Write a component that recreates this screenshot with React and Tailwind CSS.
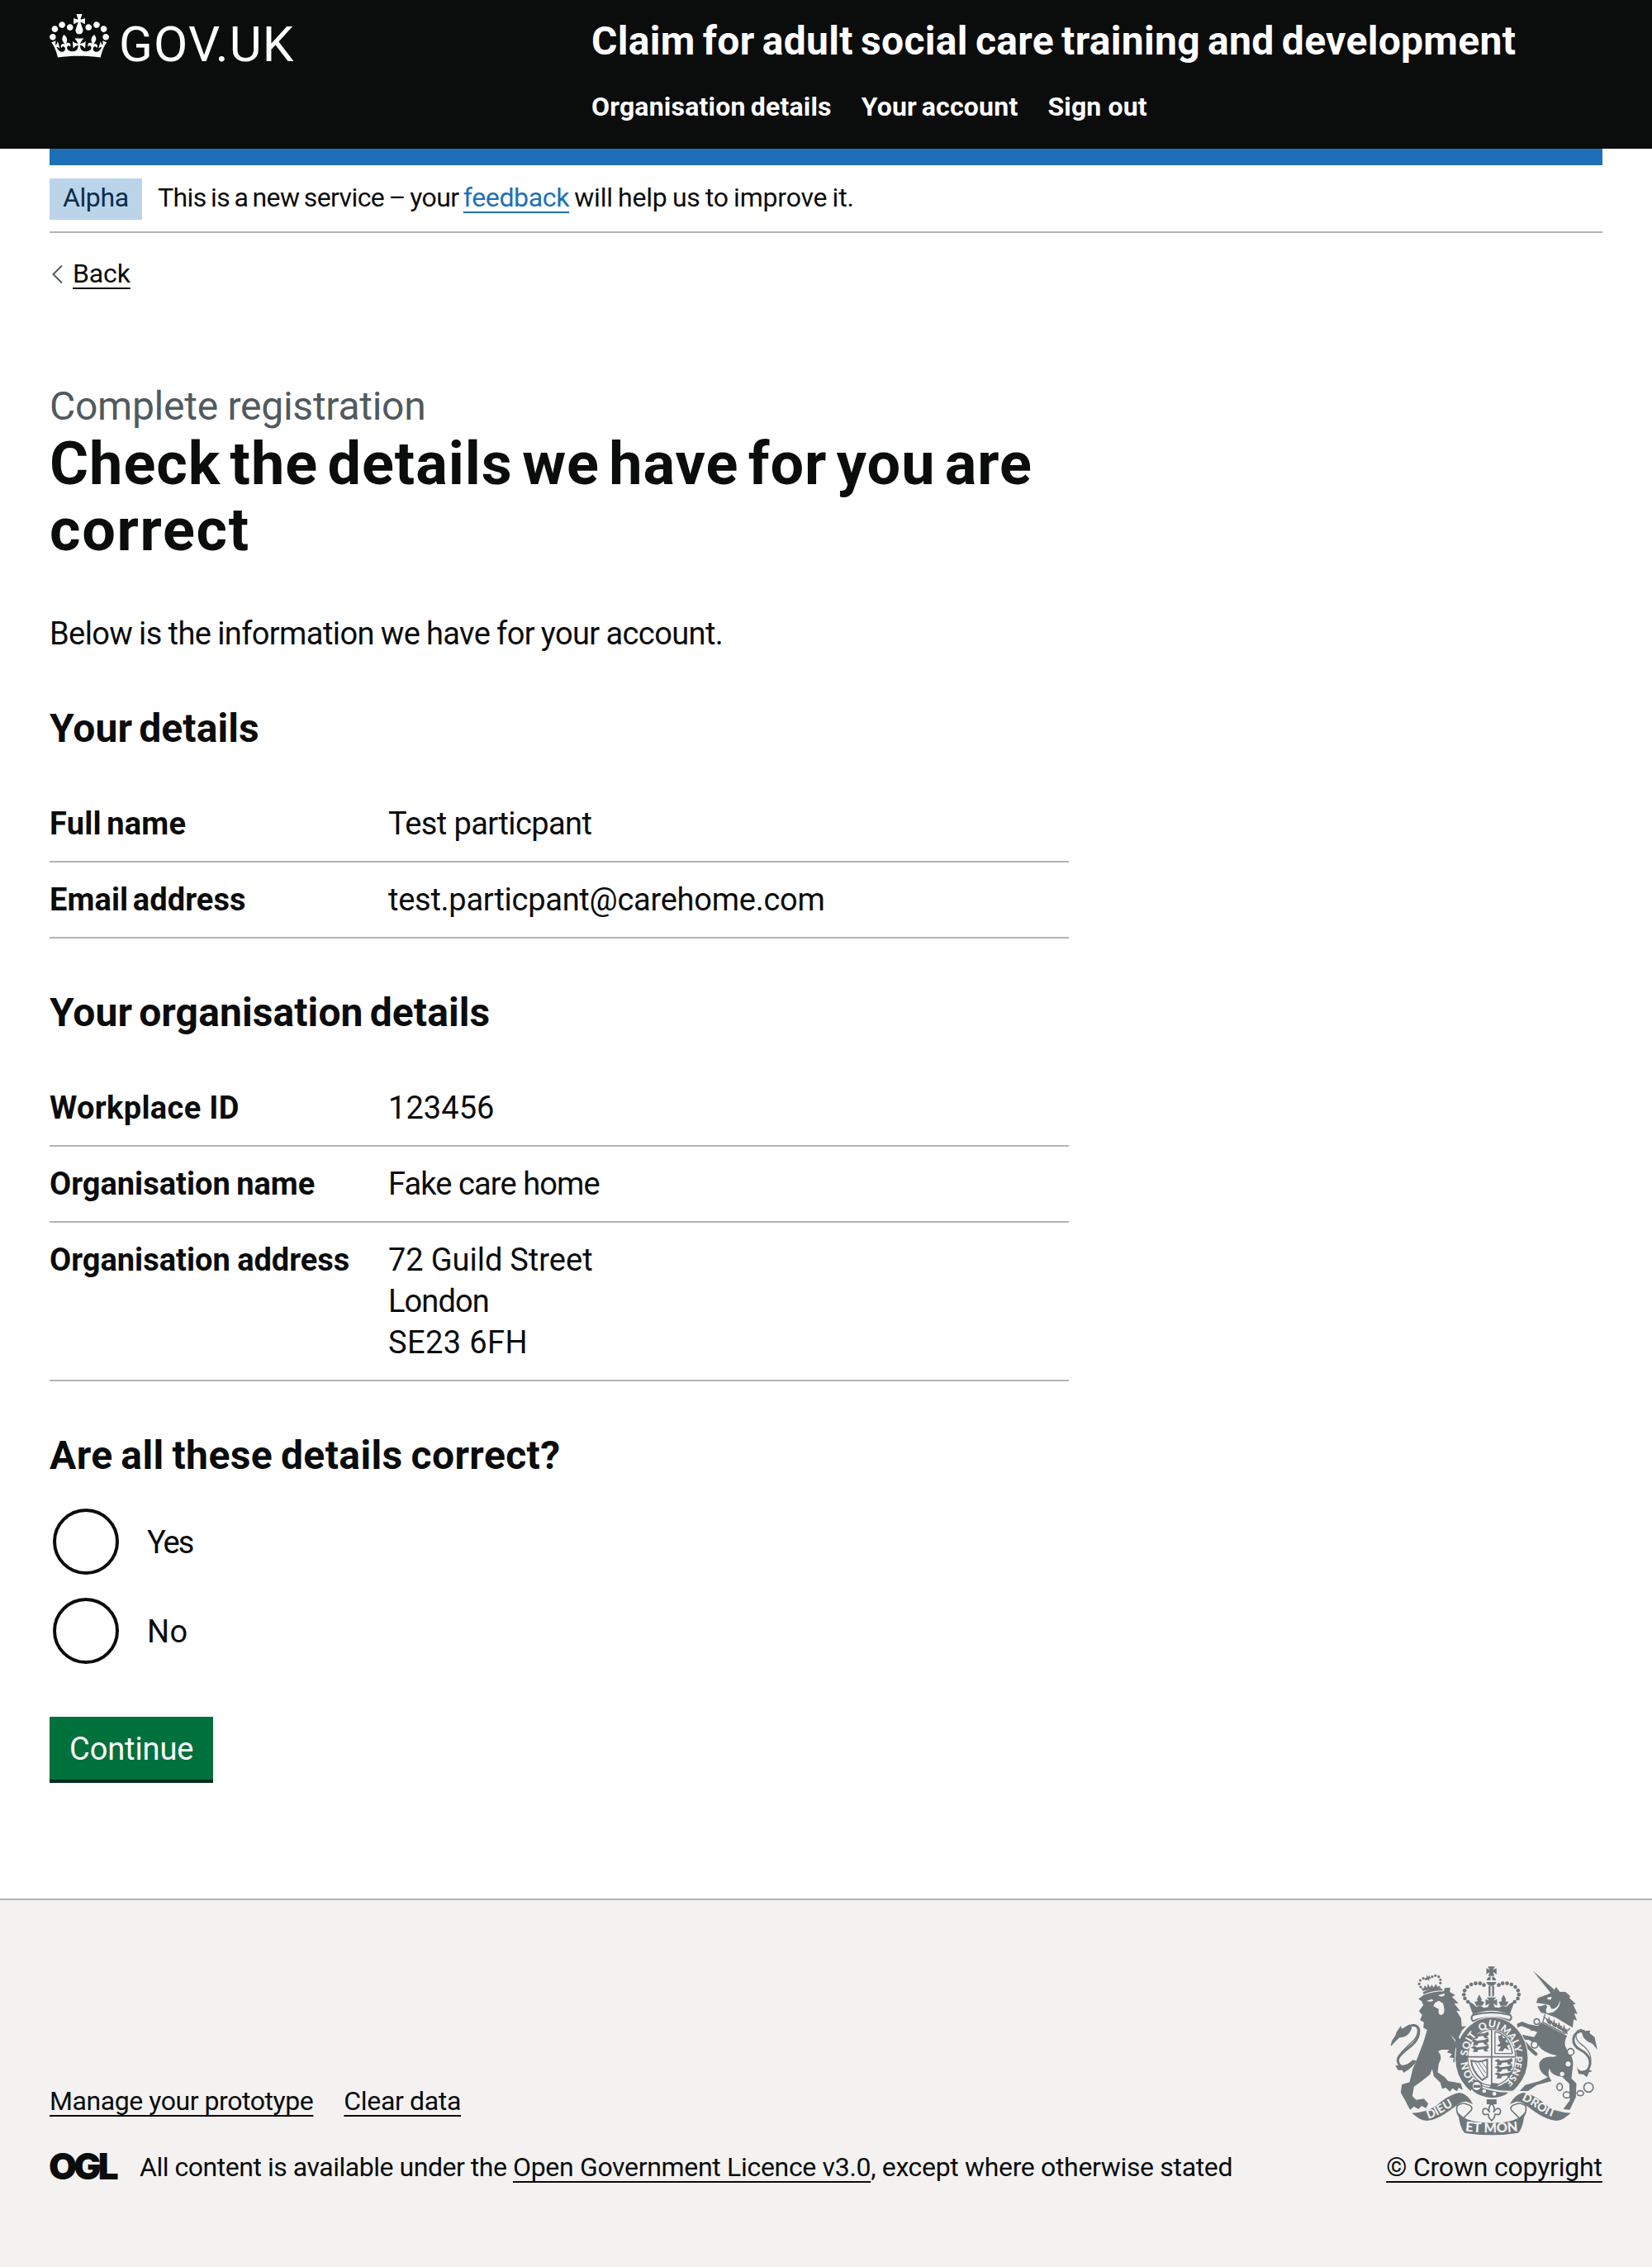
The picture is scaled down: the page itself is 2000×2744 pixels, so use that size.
import React from "react";

const link = "underline decoration-2 underline-offset-[6px] [text-decoration-skip-ink:none]";

function CrownIcon() {
  return (
    <svg viewBox="0 0 132 97" className="h-[53px] w-[72px]" fill="currentColor" aria-hidden="true">
      <path
        fillRule="evenodd"
        d="M25 30.2c3.5 1.5 7.7-.2 9.1-3.7 1.5-3.6-.2-7.8-3.9-9.2-3.6-1.4-7.6.3-9.1 3.9-1.4 3.5.3 7.5 3.9 9zM9 39.5c3.6 1.5 7.8-.2 9.2-3.7 1.5-3.6-.2-7.8-3.9-9.1-3.6-1.5-7.6.2-9.1 3.8-1.4 3.5.3 7.5 3.8 9zM4.4 57.2c3.5 1.5 7.7-.2 9.1-3.8 1.5-3.6-.2-7.7-3.9-9.1-3.5-1.5-7.6.3-9.1 3.8-1.4 3.5.3 7.6 3.9 9.1zm38.3-21.4c3.5 1.5 7.7-.2 9.1-3.8 1.5-3.6-.2-7.7-3.9-9.1-3.6-1.5-7.6.3-9.1 3.8-1.3 3.6.4 7.7 3.9 9.1zm64.4-5.6c-3.6 1.5-7.8-.2-9.1-3.7-1.5-3.6.2-7.8 3.8-9.2 3.6-1.4 7.7.3 9.2 3.9 1.3 3.5-.4 7.5-3.9 9zm15.9 9.3c-3.6 1.5-7.7-.2-9.1-3.7-1.5-3.6.2-7.8 3.7-9.1 3.6-1.5 7.7.2 9.2 3.8 1.5 3.5-.3 7.5-3.8 9zm4.7 17.7c-3.6 1.5-7.8-.2-9.2-3.8-1.5-3.6.2-7.7 3.9-9.1 3.6-1.5 7.7.3 9.2 3.8 1.3 3.5-.4 7.6-3.9 9.1zM89.3 35.8c-3.6 1.5-7.8-.2-9.2-3.8-1.4-3.6.2-7.7 3.9-9.1 3.6-1.5 7.7.3 9.2 3.8 1.4 3.6-.3 7.7-3.9 9.1zM69.7 17.7l8.9 4.7V9.3l-8.9 2.8c-.2-.3-.5-.6-.9-.9L72.4 0H59.6l3.5 11.2c-.3.3-.6.5-.9.9l-8.8-2.8v13.1l8.8-4.7c.3.3.6.7.9.9l-5 15.4v.1c-.2.8-.4 1.6-.4 2.4 0 4.1 3.1 7.5 7 8.1h.2c.3 0 .7.1 1 .1.4 0 .7 0 1-.1h.2c4-.6 7.1-4.1 7.1-8.1 0-.8-.1-1.7-.4-2.4V34l-5.1-15.4c.4-.2.7-.6 1-.9zM66 92.8c16.9 0 32.8 1.1 47.1 3.2 4-16.9 8.9-26.7 14-33.5l-9.6-3.4c1 4.9 1.1 7.2 0 10.2-1.5-1.4-3-4.3-4.2-8.7L108.6 76c2.8-2 5-3.2 7.5-3.3-4.4 9.4-10 11.9-13.6 11.2-4.3-.8-6.3-4.6-5.6-7.9 1-4.7 5.7-5.9 8-.5 4.3-8.7-3-11.4-7.6-8.8 7.1-7.2 7.9-13.5 2.1-21.1-8 6.1-8.1 12.3-4.5 20.8-4.7-5.4-12.1-2.5-9.5 6.2 3.4-5.2 7.9-2 7.2 3.1-.6 4.3-6.4 7.8-13.5 7.2-10.3-.9-10.9-8-11.2-13.8 2.5-.5 7.1 1.8 11 7.3L80.2 60c-4.1 4.4-8 5.3-12.3 5.4 1.4-4.4 8-11.6 8-11.6H55.5s6.4 7.2 7.9 11.6c-4.2-.1-8-1-12.3-5.4l1.4 16.4c3.9-5.5 8.5-7.7 10.9-7.3-.3 5.8-.9 12.8-11.1 13.8-7.2.6-12.9-2.9-13.5-7.2-.7-5 3.8-8.3 7.1-3.1 2.7-8.7-4.6-11.6-9.4-6.2 3.7-8.5 3.6-14.7-4.6-20.8-5.8 7.6-5 13.9 2.2 21.1-4.7-2.6-11.9.1-7.7 8.8 2.3-5.5 7.1-4.2 8.1.5.7 3.3-1.3 7.1-5.7 7.9-3.5.7-9-1.8-13.5-11.2 2.5.1 4.7 1.3 7.5 3.3l-4.7-15.4c-1.2 4.4-2.7 7.2-4.3 8.7-1.1-3-.9-5.3 0-10.2l-9.5 3.4c5 6.9 9.9 16.7 14 33.5 14.8-2.1 30.8-3.2 47.7-3.2z"
      />
    </svg>
  );
}

const archDots = [[352, 188], [341, 176], [337, 162], [340, 147], [350, 134], [364, 125], [380, 121], [396, 121], [410, 127]];

const lionsPassant = [
  [362, 306], [362, 330], [362, 354],
  [448, 402], [448, 426], [448, 450],
];

function MottoWord({ offset, size = 37, children }) {
  return (
    <text fontSize={size} textAnchor="middle">
      <textPath href="#garter" startOffset={offset}>{children}</textPath>
    </text>
  );
}

function RoyalArms() {
  const ink = "#6f777b";
  const paper = "#f3f2f1";
  return (
    <svg viewBox="55 50 785 636" className="h-[212px] w-[262px]" fill={ink} aria-hidden="true">
      <defs>
        <path id="garter" d="M438 503A100 112 0 0 1 438 281A100 112 0 0 1 438 503" />
        <path id="dieu" d="M208 613C250 602 280 570 332 552" />
        <path id="droit" d="M546 545C590 560 620 600 680 611" />
        <path id="etmon" d="M346 658Q438 668 530 658" />
      </defs>

      {/* lion: crown, head and mane, body, limbs, tail */}
      <g>
        <path d="M187 148L182 134L190 141L196 128L203 138L207 122L214 136L222 125L226 136L237 123L240 133L250 130L253 138Z" />
        {[[180, 134], [175, 123], [179, 110], [190, 103], [200, 105], [252, 120], [252, 108], [246, 97], [234, 93], [222, 97]].map(([x, y]) => (
          <circle key={`${x}-${y}`} cx={x} cy={y} r="4.8" />
        ))}
        <path d="M203 90L207 97L214 91L213 99L220 102L211 105L212 114L205 106L197 108L202 101Z" />
        <path d="M188 153Q220 137 255 139L262 146Q220 147 192 161Z" />
        <path d="M172 178L190 164Q225 150 264 150L268 138L288 136L286 152L306 164L294 170L318 193L302 194L324 222L310 220L327 248L330 278L346 276L330 292L318 318L346 350L350 392L346 416L330 402L322 418L308 404L298 408L300 392L284 390L294 378L276 372L284 362L256 362L244 368Q262 388 246 412L242 444L268 462L280 476L304 480L326 484L333 508L318 500L312 513L296 502L286 514L272 500L258 504L252 482L228 458L222 432L214 452Q186 476 156 496L150 530L164 544L192 540L208 558L200 574L184 566L172 578L156 568L142 580L134 566L124 546L108 518L112 488L140 480L152 430L170 388L190 336L204 290L190 282L192 262L178 254L186 236L174 222L190 200L184 186Z" />
        <path fill={paper} d="M203 184L222 178L226 184Q212 190 203 184ZM244 164L266 158L268 164Q254 174 244 164ZM232 192L246 184L262 194L266 214Q268 232 254 236Q242 232 246 214L226 204Z" />
        <path fill="none" stroke={ink} strokeWidth="9" strokeLinecap="round" d="M138 278C182 258 186 312 150 344C112 376 84 392 104 418C120 432 140 428 158 404" />
        <path fill="none" stroke={ink} strokeWidth="4" d="M146 272C180 266 176 312 146 336C120 362 92 384 96 404" />
        <path d="M72 350C72 322 90 318 92 298L108 276L112 286L140 270L148 284C138 312 118 318 104 318C92 328 86 336 72 350ZM88 418C110 420 130 422 152 398L160 410C146 432 128 438 118 446L114 436L98 436Z" />
        <path fill={paper} d="M287 306L326 348L332 362L318 350Z" />
      </g>

      {/* unicorn: horn, head, coronet collar, body, limbs, tail */}
      <g>
        <path d="M587 74L668 146L654 158Z" />
        <path d="M600 192L606 174L640 162L664 150L672 134L686 152L706 152L724 168L720 174L744 196L734 198L750 232L738 230L748 256L736 252L732 282L672 246L632 230L618 228L610 216L604 204L618 204L634 198L640 206Q630 220 640 230L660 226Q690 210 686 182Q680 214 656 214L648 200Q632 196 600 192Z" />
        <path fill={paper} d="M640 172L656 170L654 180L642 180Z" />
        <path fill="none" stroke={ink} strokeWidth="4" d="M626 242L714 304M632 232L624 262L704 304L722 284" />
        {[[642, 252], [660, 262], [678, 271], [696, 282]].map(([x, y]) => (
          <path key={x} d={`M${x} ${y + 14}L${x - 7} ${y - 2}L${x + 1} ${y + 2}L${x + 5} ${y - 12}L${x + 9} ${y + 4}L${x + 17} ${y + 4}L${x + 12} ${y + 20}Z`} />
        ))}
        <path d="M618 262L712 312Q696 340 712 362Q740 392 732 430L728 466L746 484L744 534L722 580L698 578L722 546L720 486L694 460Q654 456 648 430Q638 452 656 476L602 490L570 512L540 512L560 490L612 476L642 462Q604 440 612 408Q624 384 662 388L676 384Q622 372 608 346L572 326L556 326L580 352L606 376L600 386L584 374L560 350L542 318L552 308L592 316L604 298L568 284L546 276L532 282L530 268L548 260L574 270L606 276Z" />
        <path fill="none" stroke={ink} strokeWidth="9" strokeLinecap="round" d="M772 294C728 294 722 344 760 362C800 384 804 414 784 440" />
        <path fill="none" stroke={ink} strokeWidth="4" d="M766 288C736 290 738 326 766 344C796 366 806 390 792 424" />
        <path d="M760 286L776 294L796 292L794 302L812 316L822 362L804 340L786 332L772 318ZM744 412C748 436 764 446 786 432L804 440L792 444L784 462L772 452L754 450Z" />
        <g fill={paper}>
          <circle cx="716" cy="414" r="9" />
          <circle cx="694" cy="450" r="8" />
        </g>
        <g fill="none" stroke={ink} strokeWidth="5">
          <circle cx="602" cy="260" r="10" />
          <circle cx="586" cy="284" r="7" />
          <circle cx="594" cy="344" r="12" fill={paper} />
          <circle cx="725" cy="370" r="12" fill={paper} />
          <ellipse cx="685" cy="497" rx="10" ry="13" />
          <ellipse cx="711" cy="526" rx="13" ry="11" />
          <ellipse cx="760" cy="520" rx="12" ry="9" />
          <circle cx="790" cy="499" r="17" />
        </g>
      </g>

      {/* imperial crown */}
      <g>
        <path d="M424 60H450L443 72L456 66V88L443 80L448 94H426L431 80L419 88V66L431 72Z" />
        <path d="M420 110A17 14 0 0 1 454 110Z" />
        <path d="M418 116H456L450 126Q437 134 424 126Z" />
        <path d="M427 130H447V168H427Z" />
        <path fill={paper} d="M434 96H440V110H434ZM434 132H440V168H434Z" />
        {archDots.map(([x, y]) => (
          <g key={`${x}-${y}`}>
            <circle cx={x} cy={y} r="7" />
            <circle cx={874 - x} cy={y} r="7" />
          </g>
        ))}
        <path d="M420 172H454L444 184L458 178V202L444 194L450 208H424L430 194L416 202V178L430 184Z" />
        <path d="M393 162L402 178L400 186L412 188L404 202H382L376 188L387 186L385 178ZM481 162L490 178L488 186L499 188L492 202H470L464 188L475 186L473 178Z" />
        <path d="M352 184L372 196L382 206L396 202L410 210Q437 204 464 210L478 202L492 206L502 196L522 184L504 234Q437 206 370 234Z" />
        <path fill="none" stroke={ink} strokeWidth="6" d="M370 236Q437 218 506 236Q514 246 504 256Q437 232 370 258Q360 248 370 236Z" />
      </g>

      {/* garter and shield */}
      <ellipse cx="438" cy="392" rx="134" ry="150" fill={paper} />
      <path d="M302 300L318 318L346 350L352 392L346 416L330 402L322 418L308 404L312 370Z" />
      <ellipse cx="438" cy="392" rx="111" ry="127" fill="none" stroke={ink} strokeWidth="40" />
      <ellipse cx="438" cy="390" rx="87" ry="102" fill={paper} stroke={ink} strokeWidth="4" />
      <g fill="none" stroke={ink} strokeWidth="5">
        <path d="M438 288V492M351 388H525" />
        <path strokeWidth="4" d="M450 296V376H514M450 296Q500 304 514 376" />
      </g>
      {lionsPassant.map(([x, y]) => (
        <path
          key={`${x}-${y}`}
          d={`M${x} ${y}L${x + 14} ${y - 6}L${x + 22} ${y}L${x + 50} ${y - 4}L${x + 64} ${y - 10}L${x + 66} ${y + 2}L${x + 58} ${y + 8}L${x + 66} ${y + 14}L${x + 50} ${y + 14}L${x + 46} ${y + 6}L${x + 28} ${y + 8}L${x + 24} ${y + 16}L${x + 8} ${y + 16}L${x + 12} ${y + 6}Z`}
        />
      ))}
      <path d="M462 312L476 308L480 320L494 318L488 332L504 340L494 348L502 364L486 356L478 368L462 366L472 352L456 348L470 338L464 328Z" />
      <path fill="none" stroke={ink} strokeWidth="6" d="M364 402Q396 410 422 398V460L404 472Q366 440 364 402Z" />
      <path fill="none" stroke={ink} strokeWidth="3" d="M378 408L412 462M390 408L416 446M402 406L420 430" />
      <path fill={ink} d="M438 482L466 486L456 500H430Z" />

      <g fill={paper} fontFamily="Lato" fontWeight="900">
        <MottoWord offset="16%">HON</MottoWord>
        <MottoWord offset="33%">SOIT</MottoWord>
        <MottoWord offset="48.5%">QUI</MottoWord>
        <MottoWord offset="61.5%">MAL</MottoWord>
        <MottoWord offset="70%">Y</MottoWord>
        <MottoWord offset="82.5%" size={34}>PENSE</MottoWord>
      </g>

      {/* buckle */}
      <path stroke={paper} strokeWidth="6" d="M376 486Q438 516 508 514Q480 540 438 540Q392 536 366 512Z" />
      <circle cx="384" cy="494" r="18" fill={paper} stroke={ink} strokeWidth="6" />
      <path d="M372 490H398V500H372Z" />
      <circle cx="411" cy="512" r="7" fill={paper} />
      <circle cx="448" cy="522" r="7" fill={paper} />

      {/* motto ribbon */}
      <path d="M148 592Q196 592 236 566Q280 526 320 518Q350 520 370 560L346 550Q326 550 308 566Q262 602 236 612Q200 628 174 612Z" />
      <path d="M726 592Q680 592 640 566Q596 526 556 518Q526 520 504 560L528 550Q548 550 566 566Q612 602 640 612Q676 628 700 612Z" />
      <path fill={paper} stroke={ink} strokeWidth="5" d="M312 566Q330 552 348 560Q372 566 364 582Q346 600 334 612L322 606Q308 590 312 566ZM562 566Q544 552 526 560Q502 566 510 582Q528 600 540 612L552 606Q566 590 562 566Z" />
      <path d="M316 588Q340 628 438 628Q536 628 558 588Q552 650 534 664Q438 680 340 664Q322 646 316 588Z" />
      <g fill={paper} fontFamily="Lato" fontWeight="900" fontSize="43">
        <text><textPath href="#dieu" startOffset="0">DIEU</textPath></text>
        <text><textPath href="#droit" startOffset="0">DROIT</textPath></text>
        <text textAnchor="middle" fontSize="49"><textPath href="#etmon" startOffset="50%">ET MON</textPath></text>
      </g>

      {/* fleur-de-lis */}
      <path d="M420 542H456V560H420Z" />
      <path fill={paper} stroke={ink} strokeWidth="5" strokeLinejoin="round" d="M438 556Q452 572 446 588Q456 570 468 578Q474 590 464 598L450 596L448 608L438 620L428 608L426 596L412 598Q402 590 408 578Q420 570 430 588Q424 572 438 556Z" />
    </svg>
  );
}

function Row({ label, labelClass = "", children }) {
  return (
    <div className="flex border-b-2 border-[#b1b4b6] py-5 text-[38px] leading-[50px]">
      <dt className={`w-[410px] shrink-0 font-bold ${labelClass}`}>{label}</dt>
      <dd>{children}</dd>
    </div>
  );
}

function Radio({ label, labelClass }) {
  return (
    <label className="flex items-center">
      <span className="size-20 shrink-0 rounded-full border-4 border-[#0b0c0c]" />
      <span className={`pt-0.5 text-[38px] leading-[50px] ${labelClass}`}>{label}</span>
    </label>
  );
}

export default function App() {
  return (
    <div className="flex min-h-[2744px] w-[2000px] flex-col bg-white font-['Roboto',sans-serif] text-[#0b0c0c]">
      <header className="h-[180px] bg-[#0b0c0c] px-[60px] text-white">
        <div className="flex">
          <div className="flex w-[656px] shrink-0 items-start pt-[17px]">
            <CrownIcon />
            <span className="ml-3 pt-px text-[60px] leading-[72px] tracking-[1.2px]">GOV.UK</span>
          </div>
          <div className="pt-5">
            <div className="text-[48px] font-bold leading-[60px] tracking-[0.3px] [word-spacing:-3px]">
              Claim for adult social care training and development
            </div>
            <nav className="mt-[29px] flex gap-9 text-[32px] font-bold leading-10">
              <a className="tracking-[0.2px] [word-spacing:-2px]">Organisation details</a>
              <a className="tracking-[0.2px] [word-spacing:-2.4px]">Your account</a>
              <a className="tracking-[0.15px]">Sign out</a>
            </nav>
          </div>
        </div>
      </header>

      <div className="px-[60px]">
        <div className="h-5 bg-[#1d70b8]" />
        <div className="flex items-start border-b-2 border-[#b1b4b6] pb-3.5 pt-4 text-[32px] leading-[46px]">
          <strong className="h-[50px] w-28 bg-[#bbd4ea] pl-4 font-normal tracking-[-0.4px] text-[#0c2d4a]">Alpha</strong>
          <span className="ml-[19px] whitespace-pre">
            <span className="tracking-[-0.6px] [word-spacing:-2px]">{"This is a new service – your "}</span>
            <a className={`tracking-[-0.36px] text-[#1d70b8] ${link}`}>feedback</a>
            <span className="tracking-[-0.2px] [word-spacing:-1.5px]">{" will help us to improve it."}</span>
          </span>
        </div>
        <a className="mt-[29px] flex items-start text-[32px] leading-10">
          <svg viewBox="0 0 14 22" className="ml-[3px] mt-2.5 h-[22px] w-3.5" fill="none" stroke="#505a5f" strokeWidth="2" aria-hidden="true">
            <path d="M12 0.5L1.5 11L12 21.5" />
          </svg>
          <span className={`ml-[11px] tracking-[-0.15px] ${link}`}>Back</span>
        </a>
      </div>

      <main className="mt-[111px] px-[60px]">
        <div className="w-[1234px]">
          <span className="block text-[48px] leading-[60px] tracking-[-0.26px] text-[#505a5f]">Complete registration</span>
          <h1 className="whitespace-nowrap text-[72px] font-bold leading-[80px]">
            <span className="block tracking-[1px] [word-spacing:-7.6px]">Check the details we have for you are</span>
            <span className="block tracking-[1.7px]">correct</span>
          </h1>
          <p className="mt-[60px] text-[38px] leading-[50px] tracking-[-0.6px] [word-spacing:-1px]">
            Below is the information we have for your account.
          </p>

          <h2 className="mt-[60px] text-[48px] font-bold leading-[60px] tracking-[0.1px] [word-spacing:-4px]">Your details</h2>
          <dl className="mt-10">
            <Row label="Full name" labelClass="tracking-[0.2px] [word-spacing:-3px]"><span className="tracking-[-0.6px]">Test particpant</span></Row>
            <Row label="Email address" labelClass="tracking-[0.1px] [word-spacing:-4px]"><span className="tracking-[-0.26px]">test.particpant@carehome.com</span></Row>
          </dl>

          <h2 className="mt-[60px] text-[48px] font-bold leading-[60px] tracking-[0.1px] [word-spacing:-4px]">Your organisation details</h2>
          <dl className="mt-10">
            <Row label="Workplace ID" labelClass="tracking-[0.35px]"><span className="tracking-[0.05px]">123456</span></Row>
            <Row label="Organisation name" labelClass="[word-spacing:-2px]"><span className="tracking-[-0.9px]">Fake care home</span></Row>
            <Row label="Organisation address" labelClass="[word-spacing:-1px]">
              <span className="block [word-spacing:-0.5px]">72 Guild Street</span>
              <span className="block tracking-[-0.9px]">London</span>
              <span className="block tracking-[0.4px]">SE23 6FH</span>
            </Row>
          </dl>

          <h2 className="mt-[60px] text-[48px] font-bold leading-[60px] tracking-[0.4px] [word-spacing:-2.5px]">Are all these details correct?</h2>
          <div className="ml-1 mt-[34px] flex flex-col gap-7">
            <Radio label="Yes" labelClass="ml-[34px] tracking-[-2px]" />
            <Radio label="No" labelClass="ml-[34px] tracking-[0.5px]" />
          </div>

          <button className="mt-16 block h-20 w-[198px] border-b-4 border-[#002d18] bg-[#00703c] pb-3 pl-6 pt-3.5 text-left text-[38px] leading-[50px] tracking-[-0.1px] text-white">
            Continue
          </button>
        </div>
      </main>

      <footer className="mt-[140px] flex grow items-end justify-between border-t-2 border-[#b1b4b6] bg-[#f3f2f1] px-[60px] pb-[101px] text-[32px] leading-10">
        <div>
          <div className="flex gap-[37px]">
            <a className={`tracking-[-0.44px] ${link}`}>Manage your prototype</a>
            <a className={`tracking-[-0.34px] ${link}`}>Clear data</a>
          </div>
          <div className="mt-10 flex h-10">
            <span className="-ml-px w-[110px] font-['Inter',sans-serif] text-[44px] font-black leading-[38px] tracking-[-3.8px]">OGL</span>
            <span className="whitespace-pre">
              <span className="tracking-[-0.47px]">{"All content is available under the "}</span>
              <a className={`tracking-[-0.32px] ${link}`}>Open Government Licence v3.0</a>
              <span className="tracking-[-0.34px]">, except where otherwise stated</span>
            </span>
          </div>
        </div>
        <div className="flex flex-col items-center">
          <RoyalArms />
          <a className={`mt-3.5 tracking-[-0.2px] ${link}`}>© Crown copyright</a>
        </div>
      </footer>
    </div>
  );
}
